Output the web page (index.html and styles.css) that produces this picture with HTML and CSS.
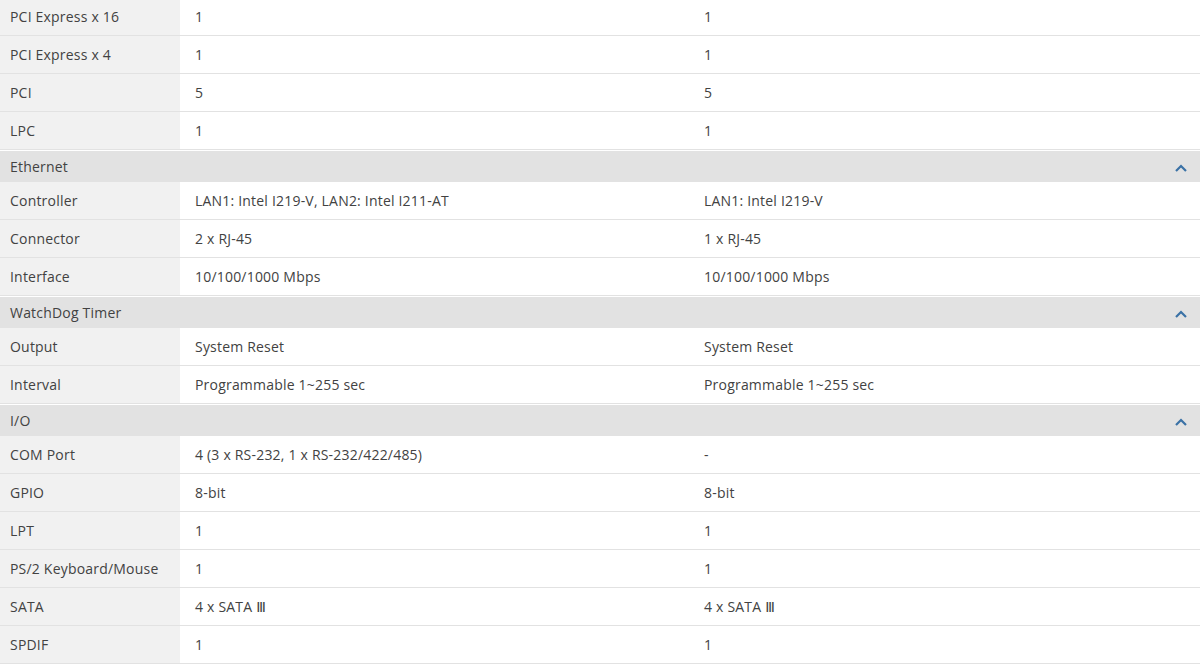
FILE: index.html
```html
<!DOCTYPE html>
<html>
<head>
<meta charset="utf-8">
<link rel="stylesheet" href="styles.css">
</head>
<body>
<div class="spec">
  <div class="row"><div class="label">PCI Express x 16</div><div class="val">1</div><div class="val">1</div></div>
  <div class="row"><div class="label">PCI Express x 4</div><div class="val">1</div><div class="val">1</div></div>
  <div class="row"><div class="label">PCI</div><div class="val">5</div><div class="val">5</div></div>
  <div class="row"><div class="label">LPC</div><div class="val">1</div><div class="val">1</div></div>

  <div class="head"><span>Ethernet</span><svg class="chev" width="12" height="8" viewBox="0 0 12 8"><path d="M1 7 L6 2 L11 7" fill="none" stroke="#3b72a6" stroke-width="2.2"/></svg></div>
  <div class="row"><div class="label">Controller</div><div class="val">LAN1: Intel I219-V, LAN2: Intel I211-AT</div><div class="val">LAN1: Intel I219-V</div></div>
  <div class="row"><div class="label">Connector</div><div class="val">2 x RJ-45</div><div class="val">1 x RJ-45</div></div>
  <div class="row"><div class="label">Interface</div><div class="val">10/100/1000 Mbps</div><div class="val">10/100/1000 Mbps</div></div>

  <div class="head"><span>WatchDog Timer</span><svg class="chev" width="12" height="8" viewBox="0 0 12 8"><path d="M1 7 L6 2 L11 7" fill="none" stroke="#3b72a6" stroke-width="2.2"/></svg></div>
  <div class="row"><div class="label">Output</div><div class="val">System Reset</div><div class="val">System Reset</div></div>
  <div class="row"><div class="label">Interval</div><div class="val">Programmable 1~255 sec</div><div class="val">Programmable 1~255 sec</div></div>

  <div class="head"><span>I/O</span><svg class="chev" width="12" height="8" viewBox="0 0 12 8"><path d="M1 7 L6 2 L11 7" fill="none" stroke="#3b72a6" stroke-width="2.2"/></svg></div>
  <div class="row"><div class="label">COM Port</div><div class="val">4 (3 x RS-232, 1 x RS-232/422/485)</div><div class="val">-</div></div>
  <div class="row"><div class="label">GPIO</div><div class="val">8-bit</div><div class="val">8-bit</div></div>
  <div class="row"><div class="label">LPT</div><div class="val">1</div><div class="val">1</div></div>
  <div class="row"><div class="label">PS/2 Keyboard/Mouse</div><div class="val">1</div><div class="val">1</div></div>
  <div class="row"><div class="label">SATA</div><div class="val">4 x SATA Ⅲ</div><div class="val">4 x SATA Ⅲ</div></div>
  <div class="row"><div class="label">SPDIF</div><div class="val">1</div><div class="val">1</div></div>
</div>
</body>
</html>
```

FILE: styles.css
```css
html, body {
  margin: 0;
  padding: 0;
  background: #fff;
}
body {
  font-family: "Open Sans", "Noto Sans", "DejaVu Sans", sans-serif;
  font-size: 14px;
  letter-spacing: 0.2px;
  color: #424242;
  overflow: hidden;
}
.spec {
  width: 1200px;
  margin-top: -2px;
}
.row {
  display: grid;
  grid-template-columns: 180px 509px 1fr;
  height: 37px;
  border-bottom: 1px solid #e2e2e2;
}
.label {
  background: #f1f1f1;
  padding: 0 0 1px 10px;
  display: flex;
  align-items: center;
  white-space: nowrap;
}
.val {
  padding: 0 0 1px 15px;
  display: flex;
  align-items: center;
  white-space: nowrap;
}
.head {
  display: flex;
  align-items: center;
  justify-content: space-between;
  border-top: 1px solid #fff;
  background: #e2e2e2;
  padding: 0 13px 0 10px;
  box-sizing: border-box;
  height: 32px;
}
.chev {
  display: block;
  margin-top: 3px;
}
```
